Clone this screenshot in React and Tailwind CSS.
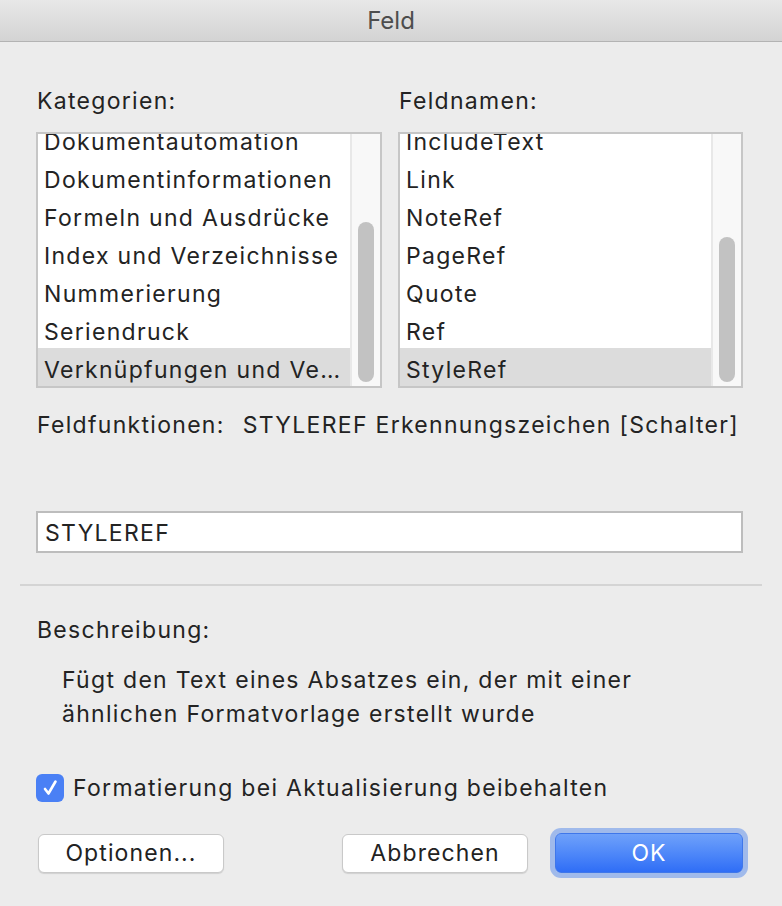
import React from "react";

const cats = [
  "Dokumentautomation",
  "Dokumentinformationen",
  "Formeln und Ausdrücke",
  "Index und Verzeichnisse",
  "Nummerierung",
  "Seriendruck",
  "Verknüpfungen und Ve…",
];
const names = ["IncludeText", "Link", "NoteRef", "PageRef", "Quote", "Ref", "StyleRef"];

function ListBox({ items, thumbTop }) {
  return (
    <div className="flex h-[256px] border-2 border-[#c6c6c6] bg-white">
      <div className="flex-1 overflow-hidden">
        <div className="mt-[-14px] flex flex-col">
          {items.map((t, i) => (
            <div
              key={t}
              className={
                "h-[38px] pl-[6px] pt-[4px] leading-[36px] whitespace-nowrap overflow-hidden " +
                (i === items.length - 1 ? "bg-[#dcdcdc]" : "")
              }
            >
              {t}
            </div>
          ))}
        </div>
      </div>
      <div className="w-[30px] border-l-2 border-[#e8e8e8] bg-[#f8f8f8] flex flex-col items-center">
        <div className="flex-1" style={{ maxHeight: thumbTop }} />
        <div className="w-[16px] flex-1 mb-[4px] rounded-full bg-[#c2c2c2]" />
      </div>
    </div>
  );
}

function Btn({ children }) {
  return (
    <button className="h-[39px] w-[186px] rounded-[6px] border border-[#c9c9c9] bg-white text-[23px] tracking-[1.1px] text-[#222] shadow-[0_1px_1px_rgba(0,0,0,0.12)]">
      {children}
    </button>
  );
}

export default function App() {
  return (
    <div className="w-[782px] h-[906px] bg-[#ececec] text-[23px] text-[#232323] tracking-[1.3px] font-['Inter',sans-serif]">
      <div className="h-[42px] border-b border-[#b3b3b3] bg-gradient-to-b from-[#e8e8e8] to-[#d3d3d3] flex items-center justify-center text-[24px] text-[#4d4d4d] tracking-normal">
        Feld
      </div>

      <div className="px-[36px]">
        <div className="mt-[45px] grid grid-cols-[346px_345px] gap-x-[16px]">
          <div className="pl-[1px] leading-[28px]">Kategorien:</div>
          <div className="pl-[1px] leading-[28px]">Feldnamen:</div>
          <div className="mt-[17px]">
            <ListBox items={cats} thumbTop={88} />
          </div>
          <div className="mt-[17px]">
            <ListBox items={names} thumbTop={103} />
          </div>
        </div>

        <div className="mt-[23px] pl-[1px] leading-[28px] flex">
          <span>Feldfunktionen:</span>
          <span className="ml-[18px]">STYLEREF Erkennungszeichen [Schalter]</span>
        </div>

        <div className="mt-[72px] h-[42px] w-[707px] border-2 border-[#bdbdbd] bg-white pl-[7px] pt-[1px] leading-[38px]">
          STYLEREF
        </div>
      </div>

      <div className="mx-[20px] mt-[31px] h-[2px] bg-[#d4d4d4]" />

      <div className="px-[36px]">
        <div className="mt-[30px] pl-[1px] leading-[28px]">Beschreibung:</div>
        <div className="mt-[19px] pl-[26px] leading-[34px]">
          <div>Fügt den Text eines Absatzes ein, der mit einer</div>
          <div>ähnlichen Formatvorlage erstellt wurde</div>
        </div>

        <div className="mt-[43px] flex items-center h-[28px]">
          <div className="w-[28px] h-[28px] rounded-[6px] bg-[#4a80f5] flex items-center justify-center">
            <svg width="20" height="20" viewBox="0 0 20 20">
              <path d="M5 11 L8.5 15.5 L15.5 3.5" fill="none" stroke="white" strokeWidth="2.6" strokeLinecap="round" strokeLinejoin="round" />
            </svg>
          </div>
          <span className="ml-[9px] leading-[28px]">Formatierung bei Aktualisierung beibehalten</span>
        </div>

        <div className="mt-[31px] flex items-center pl-[2px]">
          <Btn>Optionen...</Btn>
          <div className="ml-[118px]">
            <Btn>Abbrechen</Btn>
          </div>
          <button className="ml-[27px] h-[40px] w-[188px] rounded-[6px] border border-[#3f77ea] bg-gradient-to-b from-[#6fa1fa] to-[#2f6df6] text-white text-[23px] tracking-[1.1px] shadow-[0_0_0_5px_rgba(120,160,235,0.65)]">
            OK
          </button>
        </div>
      </div>
    </div>
  );
}
